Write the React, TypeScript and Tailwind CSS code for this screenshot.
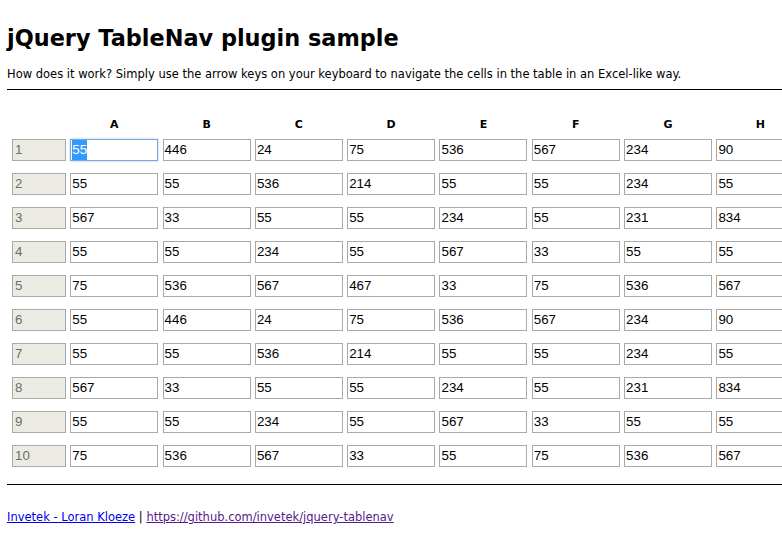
import React from "react";

const cols = ["A", "B", "C", "D", "E", "F", "G", "H"];
const base = [
  ["55", "446", "24", "75", "536", "567", "234", "90"],
  ["55", "55", "536", "214", "55", "55", "234", "55"],
  ["567", "33", "55", "55", "234", "55", "231", "834"],
  ["55", "55", "234", "55", "567", "33", "55", "55"],
  ["75", "536", "567", "467", "33", "75", "536", "567"],
];
const data = [
  ...base,
  base[0],
  base[1],
  base[2],
  base[3],
  ["75", "536", "567", "33", "55", "75", "536", "567"],
];

export default function App() {
  return (
    <div
      className="w-[782px] h-[540px] overflow-hidden bg-white text-black"
      style={{ fontFamily: '"DejaVu Sans", Verdana, sans-serif' }}
    >
      <div className="pl-[7px] w-[900px]">
        <h1 className="pt-[23px] text-[22.4px] leading-[30px] font-bold">
          jQuery TableNav plugin sample
        </h1>
        <p className="mt-[14px] text-[11.5px] leading-[14px]">
          How does it work? Simply use the arrow keys on your keyboard to navigate the cells in the table in an Excel-like way.
        </p>
        <div className="mt-[8px] h-px bg-black" />
        <div className="pl-[5px] mt-[28px]">
          <div className="grid grid-cols-[54px_repeat(8,88px)] gap-x-[4.3px]">
            <div />
            {cols.map((c) => (
              <div key={c} className="text-center text-[11px] leading-[14px] font-bold">
                {c}
              </div>
            ))}
          </div>
          <div
            className="mt-[7px] grid grid-cols-[54px_repeat(8,88px)] gap-x-[4.3px] gap-y-[12px]"
            style={{ fontFamily: '"Liberation Sans", Arial, sans-serif' }}
          >
            {data.map((row, r) => (
              <React.Fragment key={r}>
                <div className="h-[22px] border border-[#a9a9a9] bg-[#ebebe4] text-[#6d6d6d] text-[13.33px] leading-[20px] pl-[2px]">
                  {r + 1}
                </div>
                {row.map((v, c) =>
                  r === 0 && c === 0 ? (
                    <div
                      key={c}
                      className="h-[22px] border border-[#7ea4d8] shadow-[0_0_2px_#9ec3f0] bg-white text-[13.33px] leading-[20px] pl-px"
                    >
                      <span className="bg-[#3399ff] text-white inline-block leading-[20px]">{v}</span>
                    </div>
                  ) : (
                    <div
                      key={c}
                      className="h-[22px] border border-[#a9a9a9] bg-white text-[13.33px] leading-[20px] pl-px"
                    >
                      {v}
                    </div>
                  )
                )}
              </React.Fragment>
            ))}
          </div>
        </div>
        <div className="mt-[17px] h-px bg-black" />
        <p className="mt-[25px] text-[11.5px] leading-[14px]">
          <a href="#" className="text-[#0000ee] underline">Invetek - Loran Kloeze</a>
          {" | "}
          <a href="#" className="text-[#551a8b] underline">https://github.com/invetek/jquery-tablenav</a>
        </p>
      </div>
    </div>
  );
}
